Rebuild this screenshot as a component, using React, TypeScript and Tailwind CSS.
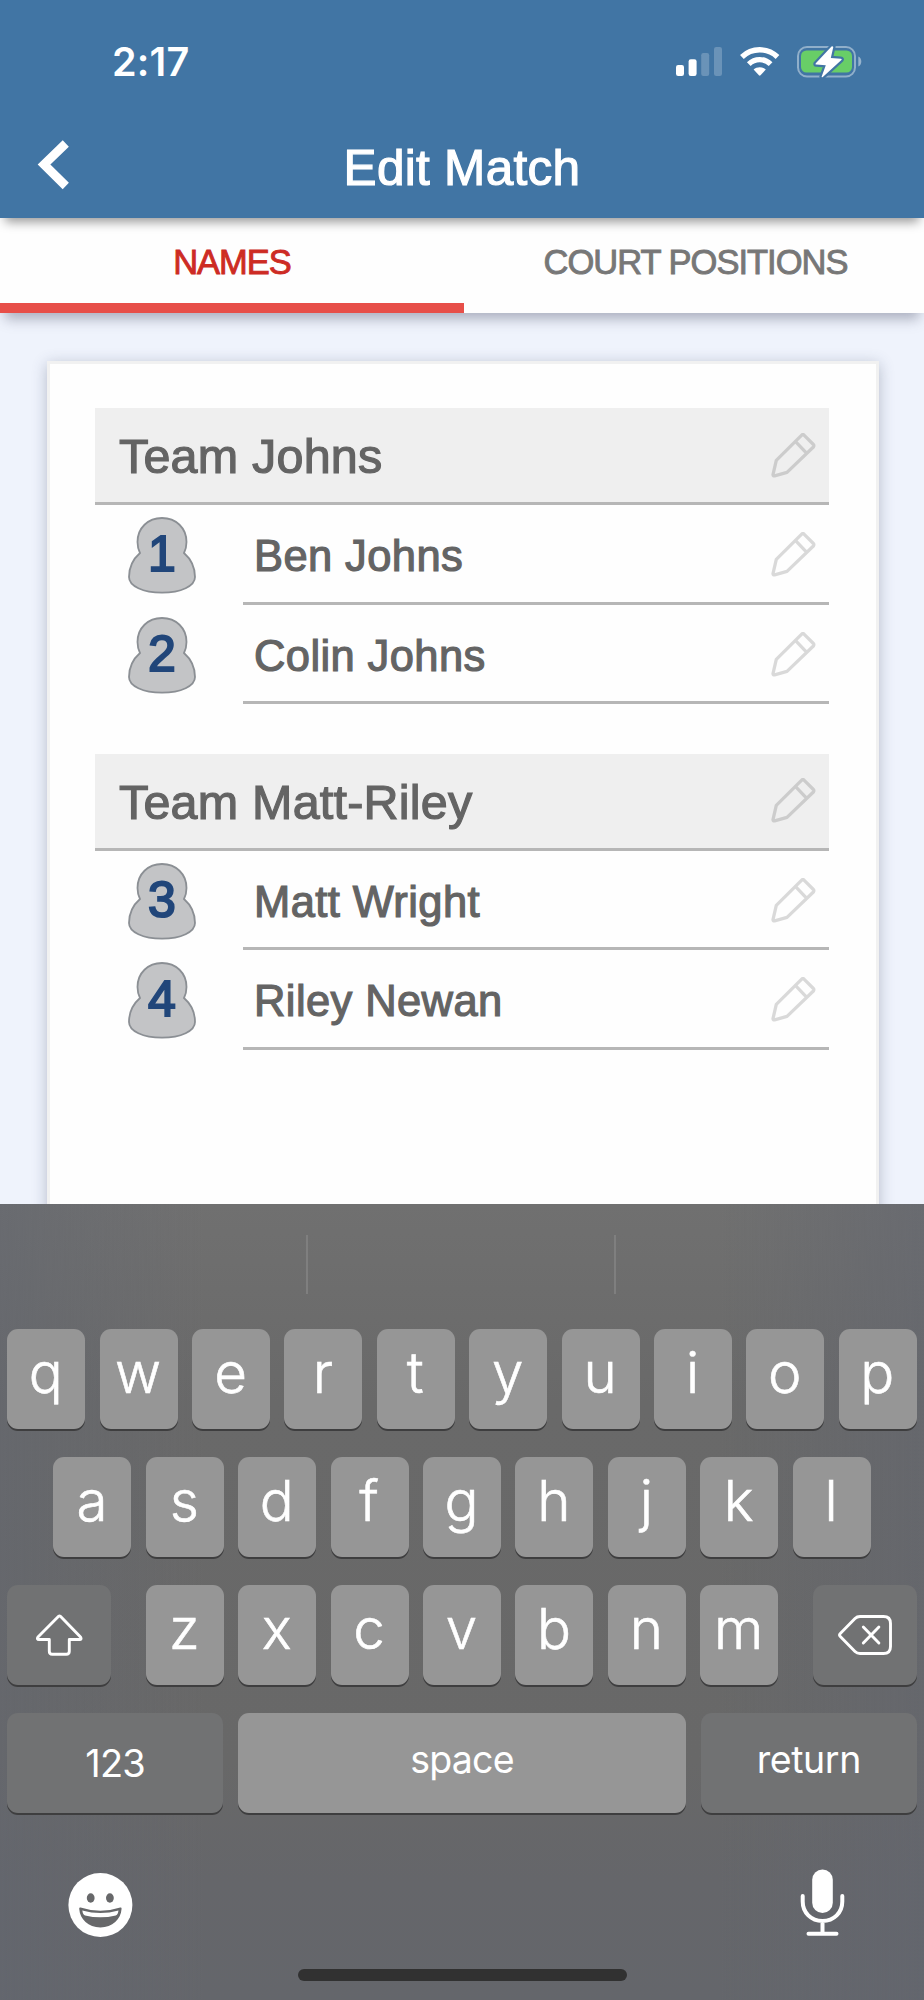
import React from "react";
import clsx from "clsx";

const TEAMS = [
  {
    name: "Team Johns",
    players: [
      { position: 1, name: "Ben Johns" },
      { position: 2, name: "Colin Johns" },
    ],
  },
  {
    name: "Team Matt-Riley",
    players: [
      { position: 3, name: "Matt Wright" },
      { position: 4, name: "Riley Newan" },
    ],
  },
];

export default function App() {
  return (
    <div className="flex h-[2000px] w-[924px] flex-col overflow-hidden bg-[#eff3fc] font-['Liberation_Sans',Arial,sans-serif]">
      <Header />
      <Tabs />
      <main className="min-h-0 flex-1 overflow-hidden pl-[47px] pr-[45px] pt-12">
        <div className="h-[1000px] border-[3px] border-[#f1f1f1] bg-[#fefefe] px-[45px] pt-11 shadow-[0_3px_14px_rgba(60,70,100,0.32)]">
          {TEAMS.map((team) => (
            <section key={team.name} className="mb-[49.5px] w-[734px]">
              <div className="flex h-[97px] items-center justify-between border-b-[3px] border-[#b6b6b6] bg-[#efefef] pl-6 pr-[13px]">
                <h2 className="pt-0.5 text-[48.5px] leading-[98px] tracking-[0.2px] text-[#646464] [-webkit-text-stroke:1.2px_#646464]">
                  {team.name}
                </h2>
                <PencilIcon />
              </div>
              {team.players.map((player) => (
                <div key={player.position} className="flex h-[99.5px]">
                  <div className="w-[148px] pl-[33px] pt-3">
                    <Badge position={player.position} />
                  </div>
                  <div className="flex flex-1 items-center justify-between border-b-[3px] border-[#b6b6b6] pl-[11px] pr-[13px] pt-[3px]">
                    <span className="pt-[3px] text-[43.5px] leading-[96px] tracking-[0.4px] text-[#646464] [-webkit-text-stroke:1.2px_#646464]">
                      {player.name}
                    </span>
                    <PencilIcon />
                  </div>
                </div>
              ))}
            </section>
          ))}
        </div>
      </main>
      <Keyboard />
    </div>
  );
}

function Header() {
  return (
    <header className="z-20 h-[218px] shrink-0 bg-[#4175a4] text-white shadow-[0_9px_10px_-5px_rgba(0,0,0,0.4)]">
      <div className="flex h-[118px] justify-between pl-[112px] pr-[61px] pt-[46px]">
        <span className="pt-px font-['Inter',sans-serif] text-[39.5px] font-semibold leading-[31px] tracking-[0.2px]">
          2:17
        </span>
        <div className="flex h-8">
          <SignalIcon />
          <WifiIcon />
          <BatteryIcon />
        </div>
      </div>
      <div className="grid h-[100px] grid-cols-[100px_1fr_100px]">
        <svg className="ml-9 mt-[21px]" width="36" height="52" viewBox="0 0 36 52" fill="none">
          <path d="M29.8 4.5 8 25.500 29.8 47" stroke="#fff" strokeWidth="8.8" />
        </svg>
        <h1 className="text-center text-[49.5px] leading-[99px] tracking-[0.3px] [-webkit-text-stroke:1.2px_#fff]">
          Edit Match
        </h1>
      </div>
    </header>
  );
}

function Tabs() {
  return (
    <nav className="z-10 flex h-[95px] shrink-0 bg-[#fefefe] text-center text-[34.5px] leading-[88px] tracking-[-1px] shadow-[0_11px_12px_-5px_rgba(70,75,100,0.4)]">
      <div className="w-[464px] border-b-10 border-[#e74f49] text-[#cd2b24] [-webkit-text-stroke:0.9px_#cd2b24]">
        <span>NAMES</span>
      </div>
      <div className="flex-1 pl-[3px] text-[#777] [-webkit-text-stroke:0.9px_#777]">
        <span>COURT POSITIONS</span>
      </div>
    </nav>
  );
}

function Badge({ position }: { position: number }) {
  return (
    <div className="relative h-[77px] w-[68px]">
      <svg width="68" height="77" viewBox="0 0 68 77">
        <path
          d="M34 1C20 1 9.5 11 9.5 25c0 4.5 1 8 2.5 11C4 43 1 52 1 60c0 9 14 15.7 33 15.7S67 69 67 60c0-8-3-17-11-24 1.5-3 2.5-6.5 2.5-11C58.5 11 48 1 34 1Z"
          fill="#c3c4c6"
          stroke="#8b8f94"
          strokeWidth="1.8"
        />
      </svg>
      <span className="absolute inset-x-0 top-0 text-center text-[50px] leading-[75px] text-[#21467a] [-webkit-text-stroke:2px_#21467a]">
        {position}
      </span>
    </div>
  );
}

function PencilIcon() {
  return (
    <svg
      width="45"
      height="45"
      viewBox="0 0 45 45"
      fill="none"
      stroke="#000"
      strokeOpacity="0.145"
      strokeWidth="3.3"
      strokeLinejoin="round"
    >
      <path d="M31.2 1.7 5.3 27.3 2 41.6Q1.900 43.2 3.6 42.8L16 39.4 42.4 14Q43.3 12.7 42.4 11.5L33 2.1Q32 1.2 31.2 1.7ZM24.6 8.7l10.2 10.6" />
    </svg>
  );
}

const ROW_1 = ["q", "w", "e", "r", "t", "y", "u", "i", "o", "p"];
const ROW_2 = ["a", "s", "d", "f", "g", "h", "j", "k", "l"];
const ROW_3 = ["z", "x", "c", "v", "b", "n", "m"];

function Keyboard() {
  return (
    <div className="z-30 h-[796.5px] shrink-0 bg-[linear-gradient(to_right,rgba(98,102,112,0.5),rgba(98,102,112,0)_22%,rgba(98,102,112,0)_78%,rgba(98,102,112,0.5)),linear-gradient(to_bottom,#707070,#696969_25%,#686868_70%,#65666a_85%,#64666b)] font-['Inter',sans-serif] text-white">
      <div className="flex h-[125.5px] justify-center gap-[306px] pr-[2px] pt-[31px]">
        <div className="h-[59px] w-0.5 bg-[#7f7f7f]" />
        <div className="h-[59px] w-0.5 bg-[#7f7f7f]" />
      </div>
      <div className="flex flex-col gap-7 px-[7.2px]">
        <Row>
          {ROW_1.map((letter) => (
            <LetterKey key={letter} letter={letter} />
          ))}
        </Row>
        <Row>
          {ROW_2.map((letter) => (
            <LetterKey key={letter} letter={letter} />
          ))}
        </Row>
        <div className="flex justify-between">
          <Key dark className="w-[104px]">
            <ShiftIcon />
          </Key>
          <Row>
            {ROW_3.map((letter) => (
              <LetterKey key={letter} letter={letter} />
            ))}
          </Row>
          <Key dark className="w-[104px]">
            <DeleteIcon />
          </Key>
        </div>
        <div className="flex gap-[14.4px]">
          <Key dark className="w-[216px] text-[38px]">
            <span className="pt-px tracking-[-0.8px]">123</span>
          </Key>
          <Key className="flex-1 text-[37.5px] tracking-[-0.8px]">
            <span className="pb-1.5">space</span>
          </Key>
          <Key dark className="w-[216px] text-[37.5px] tracking-[-0.4px]">
            <span className="pb-1.5">return</span>
          </Key>
        </div>
      </div>
      <div className="flex h-[156px] items-start justify-between pl-[68px] pr-[78px] pt-14">
        <EmojiIcon />
        <MicIcon />
      </div>
      <div className="mx-auto h-3 w-[329px] rounded-full bg-[#313131]" />
    </div>
  );
}

function Row({ children }: { children: React.ReactNode }) {
  return <div className="flex justify-center gap-[14.4px]">{children}</div>;
}

function LetterKey({ letter }: { letter: string }) {
  return (
    <Key className="w-[78px] text-[56.5px] font-light [-webkit-text-stroke:0.6px_#fff]">
      <span className="pb-[13px] pr-px leading-[87px]">{letter}</span>
    </Key>
  );
}

function Key({
  children,
  className,
  dark,
}: {
  children: React.ReactNode;
  className?: string;
  dark?: boolean;
}) {
  return (
    <div
      className={clsx(
        "flex h-[100px] items-center justify-center rounded-[11px] shadow-[0_2px_0_#3e3e3f]",
        dark ? "bg-[#717273]" : "bg-[#969696]",
        className
      )}
    >
      {children}
    </div>
  );
}

function SignalIcon() {
  return (
    <svg className="mr-[17px]" width="47" height="32" viewBox="0 0 47 32" fill="#fff">
      <rect x="0" y="19" width="8" height="11" rx="2.2" />
      <rect x="12.6" y="13.3" width="8" height="16.7" rx="2.2" />
      <rect x="25.2" y="7" width="8" height="23" rx="2.2" opacity="0.22" />
      <rect x="38" y="1" width="8" height="29" rx="2.2" opacity="0.22" />
    </svg>
  );
}

function WifiIcon() {
  return (
    <svg className="mr-[17px]" width="40" height="32" viewBox="0 0 40 32" fill="none">
      <path d="M1.9 11a25.5 25.5 0 0 1 35.6 0M8.8 18.1a15.5 15.5 0 0 1 21.8 0" stroke="#fff" strokeWidth="5.3" />
      <path d="M13.6 23.6c3.4-3.2 8.8-3.2 12.2 0l-5.3 5.7q-.8.8-1.6 0Z" fill="#fff" />
    </svg>
  );
}

function BatteryIcon() {
  return (
    <svg width="66" height="32" viewBox="0 0 66 32" fill="none">
      <rect x="1" y="1" width="57" height="29.5" rx="9" stroke="#fff" strokeOpacity="0.42" strokeWidth="2" />
      <path d="M61.3 10.5c4 1.5 4 8.5 0 10Z" fill="#fff" fillOpacity="0.45" />
      <rect x="4" y="4.5" width="51" height="22" rx="5.5" fill="#68ce67" />
      <path
        d="M34.5.6 18.8 17.3q-.8 1.2.6 1.3l9.4.6-4.2 11.5q.3 1 1.2.3L44.4 14q.9-1.2-.6-1.3l-10-.6L36.3 1q-.8-1.3-1.8-.4Z"
        fill="#fff"
        stroke="#4175a4"
        strokeWidth="4.5"
        paintOrder="stroke"
      />
    </svg>
  );
}

function ShiftIcon() {
  return (
    <svg width="47" height="42" viewBox="0 0 47 42" fill="none" stroke="#fff" strokeWidth="2.9" strokeLinejoin="round">
      <path d="M22.6 2.3 2 23q-1.5 2.5 1 2.5h10.3v11.8q0 3 3 3h14q3 0 3-3V25.5h10.2q2.5 0 1-2.5L24.4 2.3q-.9-.8-1.8 0Z" />
    </svg>
  );
}

function DeleteIcon() {
  return (
    <svg width="54" height="40" viewBox="0 0 54 40" fill="none" stroke="#fff" strokeWidth="2.9" strokeLinecap="round">
      <path d="M22 1.5h23.500q7 0 7 7v23q0 7-7 7H22q-3 0-5-2L2.3 21.5q-1.5-1.5 0-3L17 3.5q2-2 5-2Z" />
      <path d="m25.3 12 15.6 16M40.9 12 25.3 28" />
    </svg>
  );
}

function EmojiIcon() {
  return (
    <svg className="mt-[3.5px]" width="65" height="65" viewBox="0 0 65 65">
      <circle cx="32.4" cy="32" r="32" fill="#fff" />
      <g fill="#67686a">
        <ellipse cx="22.7" cy="25" rx="3.9" ry="4.7" />
        <ellipse cx="41.9" cy="25" rx="3.9" ry="4.7" />
        <path d="M12.6 34.5q19.8 6.5 39.6 0 1.5-.3 1.4 1.3C52.8 46.5 44.5 54.5 32.4 54.5S12 46.5 11.2 35.8q-.1-1.6 1.4-1.3Z" />
      </g>
      <path d="M14.3 37.4q18.1 5 36.2 0-.7 4.6-2.8 5.1-15.3 3.7-30.6 0-2.1-.5-2.8-5.1Z" fill="#fff" />
    </svg>
  );
}

function MicIcon() {
  return (
    <svg width="46" height="68" viewBox="0 0 46 68" fill="none" stroke="#fff" strokeWidth="4" strokeLinecap="round">
      <rect x="12.2" y="0.5" width="20.6" height="43.5" rx="10.3" fill="#fff" stroke="none" />
      <path d="M2.7 27v5.500c0 11 8.3 19.5 19.8 19.5s19.8-8.5 19.8-19.5V27M22.5 52.5V64M8.5 64.8h28" />
    </svg>
  );
}
